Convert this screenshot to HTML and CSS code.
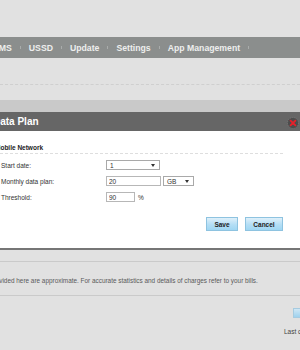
FILE: index.html
```html
<!DOCTYPE html>
<html lang="en">
<head>
  <meta charset="UTF-8" />
  <title>Statistics - Data Plan</title>
  <link rel="stylesheet" href="styles.css">
</head>
<body>
  <div class="page">
    <div class="top"></div>

    <nav class="menu">
      <ul>
        <li>SMS</li>
        <li>USSD</li>
        <li>Update</li>
        <li>Settings</li>
        <li>App Management</li>
      </ul>
    </nav>

    <div class="subbar"></div>
    <div class="shade"></div>

    <div class="dialog">
      <div class="dialog-title">
        <span>Data Plan</span>
        <svg class="close" width="12" height="12" viewBox="0 0 12 12">
          <circle cx="6" cy="6" r="5.5" fill="#4d4d4d" stroke="#7a7a7a" stroke-dasharray="1 1"/>
          <path d="M3.6 3.6 L8.4 8.4 M8.4 3.6 L3.6 8.4" stroke="#e8202a" stroke-width="1.8" stroke-linecap="round"/>
        </svg>
      </div>

      <div class="dialog-body">
        <h4 class="section">Mobile Network</h4>

        <div class="form">
          <label>Start date:</label>
          <div class="field">
            <div class="select w-date"><span>1</span><i class="arrow"></i></div>
          </div>

          <label>Monthly data plan:</label>
          <div class="field">
            <input class="text w-plan" type="text" value="20">
            <div class="select w-unit"><span>GB</span><i class="arrow"></i></div>
          </div>

          <label>Threshold:</label>
          <div class="field">
            <input class="text w-threshold" type="text" value="90">
            <span class="unit">%</span>
          </div>
        </div>

        <div class="actions">
          <button class="btn">Save</button>
          <button class="btn btn-cancel">Cancel</button>
        </div>
      </div>
    </div>

    <div class="content">
      <p class="note">The data provided here are approximate. For accurate statistics and details of charges refer to your bills.</p>
      <div class="clear-row">
        <span class="btn-mini"></span>
      </div>
      <p class="last">Last cleared:</p>
    </div>
  </div>
</body>
</html>
```

FILE: styles.css
```css
* {
  box-sizing: border-box;
  margin: 0;
  padding: 0;
}

body {
  font-family: 'Liberation Sans', Arial, sans-serif;
  background-color: #e1e1e1;
  color: #333;
}

.page {
  width: 300px;
  height: 350px;
  overflow: hidden;
}

.top {
  height: 37px;
}

/* main menu */
.menu {
  height: 21px;
  background-color: #8b8e8d;
  display: flex;
  align-items: center;
}

.menu ul {
  list-style: none;
  display: flex;
  align-items: center;
  margin-left: -7px;
}

.menu li {
  display: flex;
  align-items: center;
  gap: 8px;
  margin-right: 8px;
  color: #eeeeee;
  font-size: 8.7px;
  font-weight: bold;
  white-space: nowrap;
}

.menu li::after {
  content: "";
  width: 1px;
  height: 3px;
  background-color: #a9acab;
}

.subbar {
  height: 27px;
  margin-bottom: 15px;
  border-bottom: 1px dashed #cfcfcf;
}

.shade {
  height: 12px;
  background-color: #c9c9c9;
}

/* dialog */
.dialog {
  background-color: white;
  border-bottom: 2px solid #767676;
}

.dialog-title {
  height: 19px;
  background-color: #666666;
  display: flex;
  align-items: center;
  justify-content: space-between;
  padding-right: 1px;
  color: white;
  font-size: 10px;
  font-weight: bold;
}

.dialog-title span {
  margin-left: -7px;
}

.close {
  margin-top: 2px;
}

.dialog-body {
  height: 117px;
  padding: 13px 17px 0 1px;
}

.section {
  margin-left: -6px;
  padding-bottom: 2px;
  border-bottom: 1px dashed #dedede;
  font-size: 6.5px;
  font-weight: bold;
  color: #222;
}

.form {
  display: grid;
  grid-template-columns: 105px auto;
  grid-auto-rows: 16px;
  align-items: center;
  margin-top: 3px;
  font-size: 6.5px;
  color: #333;
}

.field {
  display: flex;
  align-items: center;
  gap: 2px;
}

.select,
.text {
  height: 10px;
  border: 1px solid #b7b7b7;
  background-color: white;
  font-family: inherit;
  font-size: 6.5px;
  color: #333;
}

.select {
  display: flex;
  align-items: center;
  justify-content: space-between;
  padding: 0 4px 0 3px;
  border-color: #a9a9a9;
}

.text {
  padding: 0 2px;
  outline: none;
}

.arrow {
  border-left: 2px solid transparent;
  border-right: 2px solid transparent;
  border-top: 3px solid #333;
}

.w-date { width: 54px; }
.w-plan { width: 55px; }
.w-unit { width: 31px; }
.w-threshold { width: 29px; }

.unit {
  margin-left: 1px;
}

.actions {
  display: flex;
  justify-content: flex-end;
  gap: 7px;
  margin-top: 12px;
}

.btn {
  width: 32px;
  height: 14px;
  border: 1px solid #8ec3e0;
  background: linear-gradient(#dff0fa, #b4def5 55%, #9fd6f3);
  font-family: inherit;
  font-size: 6.5px;
  font-weight: bold;
  color: #222;
}

.btn-cancel {
  width: 38px;
}

/* page content under the dialog */
.content {
  padding-top: 11px;
}

.note {
  border-top: 1px solid #cacaca;
  border-bottom: 1px solid #cacaca;
  height: 35px;
  padding-top: 15px;
  margin-left: -37px;
  font-size: 6.4px;
  color: #5a5a5a;
  white-space: nowrap;
}

.clear-row {
  display: flex;
  justify-content: flex-end;
  padding-top: 12px;
  margin-right: -20px;
}

.btn-mini {
  width: 27px;
  height: 10px;
  border: 1px solid #a6cbe0;
  background: linear-gradient(#cfe7f5, #9fd2ee);
}

.last {
  margin-top: 10px;
  margin-left: 284px;
  font-size: 6.5px;
  color: #444;
  white-space: nowrap;
}
```
